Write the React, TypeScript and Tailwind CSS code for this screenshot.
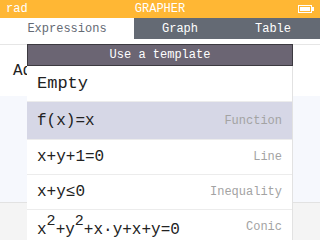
import React from "react";

const mono = { fontFamily: '"Liberation Mono", "DejaVu Sans Mono", monospace' };

const templates = [
  { label: "Function", expr: <>f(x)=x</>, active: true, h: "h-[38px]" },
  { label: "Line", expr: <>x+y+1=0</>, h: "h-[35px]" },
  { label: "Inequality", expr: <>x+y≤0</>, h: "h-[35px]" },
  {
    label: "Conic",
    h: "h-[35px]",
    expr: (
      <span className="flex items-end pt-[6px]">
        x<span className="text-[15px] -translate-y-[9px]">2</span>+y<span className="text-[15px] -translate-y-[9px]">2</span>+x·y+x+y=0
      </span>
    ),
  },
];

export default function App() {
  return (
    <div className="relative w-[320px] h-[240px] overflow-hidden bg-white flex flex-col" style={mono}>
      {/* Title bar */}
      <div className="h-[18px] bg-[#ffb734] flex items-center px-[6px] text-white text-[12px]">
        <span className="flex-1">rad</span>
        <span>GRAPHER</span>
        <span className="flex-1 flex justify-end">
          <svg width="16" height="8" viewBox="0 0 16 8" className="mr-[0px]">
            <rect x="0.5" y="0.5" width="13" height="7" fill="none" stroke="white" />
            <rect x="2" y="2" width="10" height="4" fill="white" />
            <rect x="14" y="2" width="2" height="4" fill="white" />
          </svg>
        </span>
      </div>

      {/* Tabs */}
      <div className="h-[21px] bg-[#646a74] flex text-[12px]">
        <div className="w-[134px] bg-white text-[#646a74] flex items-center justify-center">Expressions</div>
        <div className="w-[92px] text-white flex items-center justify-center">Graph</div>
        <div className="flex-1 text-white flex items-center justify-center">Table</div>
      </div>
      <div className="h-[6px] bg-white border-b border-[#e6e6e6]" />

      {/* Background list */}
      <div className="h-[51px] bg-white flex items-center pl-[13px] text-[16px] text-[#222]">Add an element</div>
      <div className="h-[107px] bg-[#f6f8fd] border-b border-[#e2e2e2]" />
      <div className="flex-1 bg-[#f4f4f4]" />

      {/* Template picker */}
      <div className="absolute left-[27px] top-[44px] w-[266px]">
        <div className="h-[22px] bg-[#6b6573] border border-[#3c3a40] text-white text-[12px] flex items-center justify-center">
          Use a template
        </div>
        <div className="bg-white border-r border-[#e2e2e2]">
          <div className="h-[36px] flex items-center px-[10px] text-[17px] text-[#222] border-b border-[#ececec]">Empty</div>
          {templates.map((t) => (
            <div
              key={t.label}
              className={`${t.h} flex items-center justify-between px-[10px] border-b border-[#ececec] ${t.active ? "bg-[#d6d7e6]" : "bg-white"}`}
            >
              <span className="text-[16px] text-[#222]">{t.expr}</span>
              <span className="text-[12px] text-[#a3a3a3]">{t.label}</span>
            </div>
          ))}
        </div>
      </div>
    </div>
  );
}
